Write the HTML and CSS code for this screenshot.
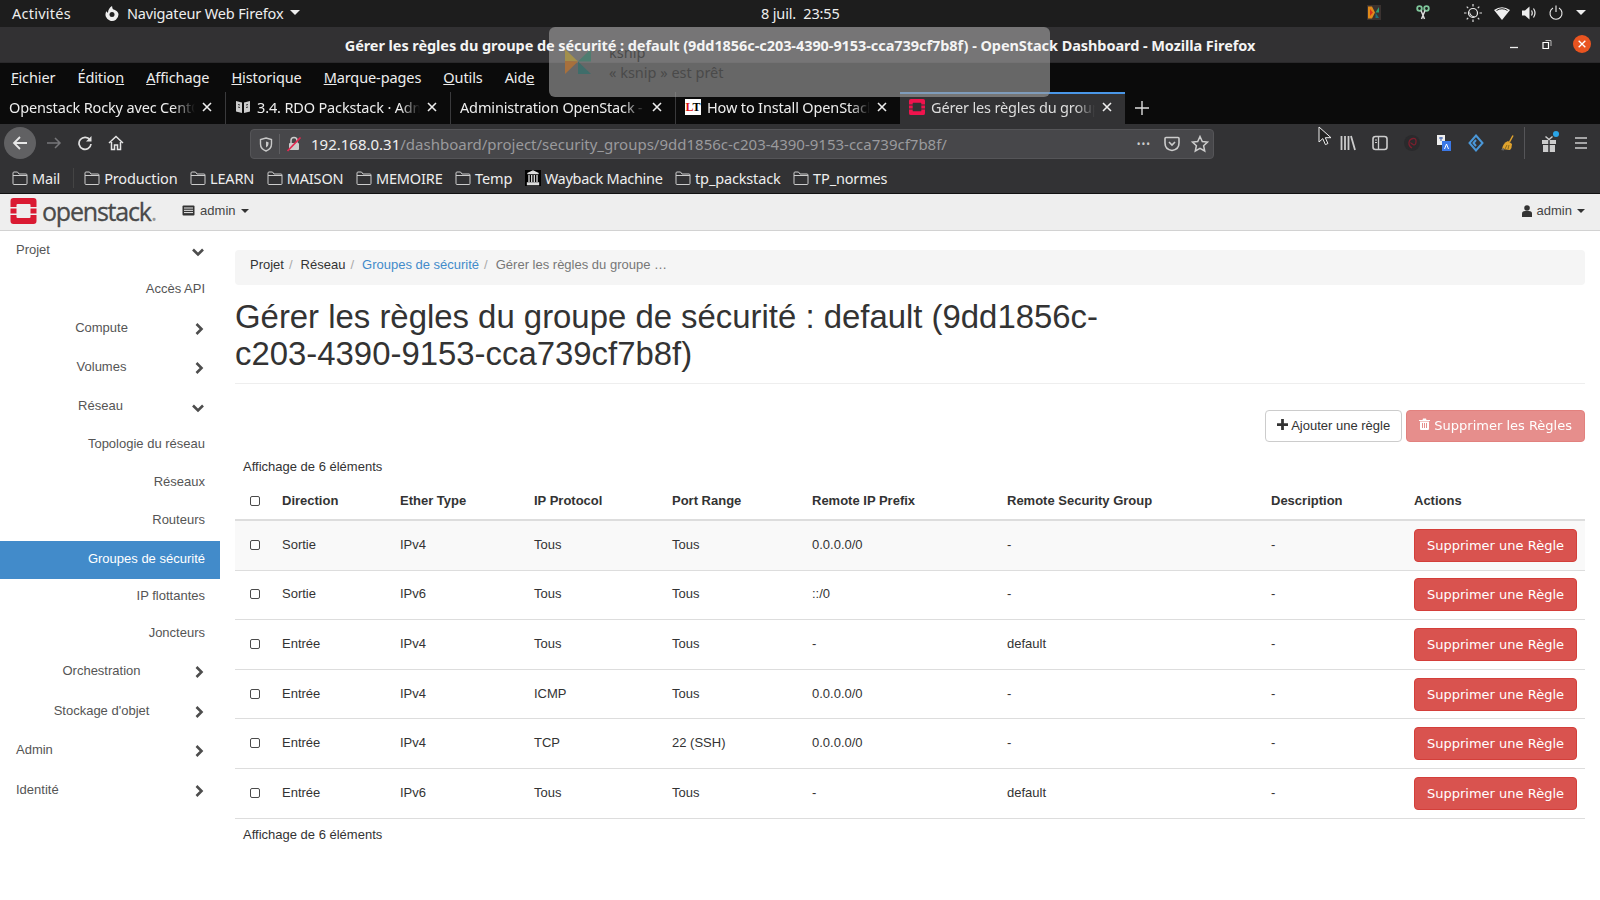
FILE: index.html
```html
<!DOCTYPE html>
<html lang="fr">
<head>
<meta charset="UTF-8">
<title>Gérer les règles du groupe de sécurité - OpenStack Dashboard</title>
<link rel="stylesheet" href="styles.css">
</head>
<body>

<svg class="sprites" width="0" height="0">
    <symbol id="folder" viewBox="0 0 16 16"><path d="M1 13.500V3q0-1 1-1h3.500l1.500 2h7q1 0 1 1v8.500q0 1-1 1H2q-1 0-1-1zM1 5.500h14" fill="none" stroke="currentColor"/></symbol>
    <symbol id="stack" viewBox="0 0 26 26"><path fill="currentColor" d="M3 0h20q3 0 3 3v6h-6V7q0-1-1-1H7q-1 0-1 1v2H0V3q0-3 3-3zM0 17h6v2q0 1 1 1h12q1 0 1-1v-2h6v6q0 3-3 3H3q-3 0-3-3zM0 10.500h6v5H0zM20 10.500h6v5h-6z"/></symbol>
    <symbol id="close" viewBox="0 0 12 12"><path d="M2 2l8 8M10 2l-8 8" stroke="currentColor" stroke-width="1.600" fill="none"/></symbol>
    <symbol id="chev-right" viewBox="0 0 12 14"><path d="M3.500 2l5 5-5 5" stroke="currentColor" stroke-width="2.600" fill="none"/></symbol>
    <symbol id="chev-down" viewBox="0 0 14 12"><path d="M2 3.500l5 5 5-5" stroke="currentColor" stroke-width="2.600" fill="none"/></symbol>
</svg>

<!-- barre du bureau -->
<div class="desktop-bar">
    <div class="desktop-left">
        <span class="activities">Activités</span>
        <span class="app-menu">
            <svg width="16" height="16" viewBox="0 0 16 16"><path fill="#eee" d="M8 1c.5 1.500 0 2.500 1.500 3.500C12 5 14.500 7 14.500 9.500A6.500 6.500 0 1 1 2.500 6c.3 1 .8 1.500 1.500 1.800C4 5 5.500 2.500 8 1z"/><circle cx="8" cy="9.500" r="2.500" fill="#222"/></svg>
            Navigateur Web Firefox <i class="caret-light"></i>
        </span>
    </div>
    <div class="desktop-clock">8 juil.&nbsp; 23:55</div>
    <div class="tray">
        <svg width="14" height="15" viewBox="0 0 14 15"><rect width="14" height="15" fill="#3a3230"/><path d="M1 1.500h4l3 6-3 6H1z" fill="#e08a1a"/><path d="M3 4l3 3.500-3 3.500z" fill="#d8321c"/><path d="M12 2L8.500 7.500H12z" fill="#2e9e78"/><path d="M8.500 7.500L12 13H8.500z" fill="#1c6f7a"/></svg>
        <svg class="tray-scissors" width="14" height="16" viewBox="0 0 14 16"><circle cx="3.500" cy="3.500" r="2.300" fill="none" stroke="#7fc79b" stroke-width="1.800"/><circle cx="10.500" cy="3.500" r="2.300" fill="none" stroke="#7fc79b" stroke-width="1.800"/><path d="M5 5.500L8.500 14M9 5.500L5.500 14" stroke="#ddd" stroke-width="1.500"/></svg>
        <svg class="tray-sun" width="18" height="18" viewBox="0 0 18 18"><circle cx="9" cy="9" r="4.500" fill="#222" stroke="#eee" stroke-width="1.200"/><path d="M6 7a4 4 0 0 0 6 5 4.500 4.500 0 0 1-6-5z" fill="#eee"/><path d="M9 0v2.500M9 15.500V18M0 9h2.500M15.500 9H18M2.700 2.700l1.500 1.500M13.800 13.800l1.500 1.500M15.300 2.700l-1.500 1.500M4.200 13.800l-1.500 1.500" stroke="#ddd" stroke-width="1.200"/></svg>
        <svg width="16" height="14" viewBox="0 0 16 14"><path fill="#eee" d="M0 4Q8-1.500 16 4L8 14z"/><path d="M2.500 4.500Q8 1 13.500 4.500" stroke="#222" fill="none"/></svg>
        <svg width="15" height="14" viewBox="0 0 15 14"><path fill="#eee" d="M0 4.500h3l4.500-4v13L3 9.500H0z"/><path d="M9.500 4.500q1.500 2.500 0 5M11.500 2.500q3 4.500 0 9" stroke="#eee" fill="none" stroke-width="1.200"/></svg>
        <svg width="14" height="15" viewBox="0 0 14 15"><path d="M4 3a6 6 0 1 0 6 0M7 .5v6.500" stroke="#eee" fill="none" stroke-width="1.100"/></svg>
        <i class="caret-light"></i>
    </div>
</div>

<!-- fenetre firefox -->
<div class="title-bar">
    <b class="window-title">Gérer les règles du groupe de sécurité : default (9dd1856c-c203-4390-9153-cca739cf7b8f) - OpenStack Dashboard - Mozilla Firefox</b>
    <div class="window-buttons">
        <svg width="10" height="10" viewBox="0 0 10 10"><path d="M1 8.500h8" stroke="#eee" stroke-width="1.300"/></svg>
        <svg class="window-restore" width="10" height="12" viewBox="0 0 10 12"><path d="M1 4.500h5.500v6H1z" stroke="#fff" fill="none" stroke-width="1.200"/><path d="M3.500 2.500h5.500v5.500" stroke="#bbb" fill="none"/></svg>
        <span class="window-close"><svg width="10" height="10"><use href="#close"/></svg></span>
    </div>
</div>

<div class="menu-bar">
    <span><u>F</u>ichier</span>
    <span>Éditio<u>n</u></span>
    <span><u>A</u>ffichage</span>
    <span><u>H</u>istorique</span>
    <span><u>M</u>arque-pages</span>
    <span><u>O</u>utils</span>
    <span>Aid<u>e</u></span>
</div>

<div class="tab-bar">
    <div class="tab">
        <span class="tab-label">Openstack Rocky avec CentOS 7</span>
        <svg class="tab-close" width="12" height="12"><use href="#close"/></svg>
    </div>
    <div class="tab">
        <svg class="tab-icon" width="16" height="14" viewBox="0 0 16 14"><path fill="#ccc" d="M1 1l6 1.500V13L1 11.500zM15 1L9 2.500V13l6-1.500z"/><path d="M3 4.500l2 .5M3 7l2 .5M11 5l2-.5M11 7.500l2-.5" stroke="#333"/></svg>
        <span class="tab-label">3.4. RDO Packstack · Administration</span>
        <svg class="tab-close" width="12" height="12"><use href="#close"/></svg>
    </div>
    <div class="tab">
        <span class="tab-label">Administration OpenStack - Cloud</span>
        <svg class="tab-close" width="12" height="12"><use href="#close"/></svg>
    </div>
    <div class="tab">
        <span class="tab-icon lt-icon"><em>L</em>T</span>
        <span class="tab-label">How to Install OpenStack on CentOS</span>
        <svg class="tab-close" width="12" height="12"><use href="#close"/></svg>
    </div>
    <div class="tab tab-active">
        <svg class="tab-icon stack-red" width="16" height="16"><use href="#stack"/></svg>
        <span class="tab-label">Gérer les règles du groupe de sécurité</span>
        <svg class="tab-close" width="12" height="12"><use href="#close"/></svg>
    </div>
    <svg class="tab-new" width="16" height="16" viewBox="0 0 16 16"><path d="M8 1v14M1 8h14" stroke="#ddd" stroke-width="1.400"/></svg>
</div>

<div class="nav-bar">
    <span class="nav-back">
        <svg width="18" height="18" viewBox="0 0 18 18"><path d="M16 9H3M9 3L3 9l6 6" stroke="#e8e8e8" stroke-width="1.800" fill="none"/></svg>
    </span>
    <svg class="nav-btn nav-forward" width="18" height="18" viewBox="0 0 18 18"><path d="M2 9h13M10 4l5 5-5 5" stroke="#77777a" stroke-width="1.500" fill="none"/></svg>
    <svg class="nav-btn" width="16" height="16" viewBox="0 0 16 16"><path d="M13 5A6 6 0 1 0 14 9" stroke="#e0e0e0" stroke-width="1.700" fill="none"/><path d="M14.500 1v5.500H9z" fill="#e0e0e0"/></svg>
    <svg class="nav-btn nav-home" width="16" height="16" viewBox="0 0 16 16"><path d="M1 8l7-6.500L15 8M3.500 7v7.500h3V10h3v4.500h3V7" stroke="#e5e5e5" stroke-width="1.500" fill="none"/></svg>
    <div class="url-box">
        <svg width="14" height="15" viewBox="0 0 14 15"><path d="M7 1l5.500 1.500V7q0 5-5.500 7Q1.500 12 1.500 7V2.500z" stroke="#c8c8c8" stroke-width="1.400" fill="none"/><path d="M7 4.500l2.500.7V7q0 2.500-2.500 3.500z" fill="#c8c8c8"/></svg>
        <span class="url-sep"></span>
        <svg width="16" height="16" viewBox="0 0 16 16"><rect x="3" y="7" width="10" height="7" rx="1" fill="#ccc"/><path d="M5 7V4.500a3 3 0 0 1 6 0V7" stroke="#ccc" stroke-width="1.500" fill="none"/><path d="M1.500 15L14.500 1.500" stroke="#e22850" stroke-width="1.800"/></svg>
        <span class="url-text"><span class="url-host">192.168.0.31</span>/dashboard/project/security_groups/9dd1856c-c203-4390-9153-cca739cf7b8f/</span>
        <span class="url-dots">•••</span>
        <svg width="16" height="16" viewBox="0 0 16 16"><path d="M2 1.500h12q1 0 1 1V7q0 6.500-7 7.500Q1 13.500 1 7V2.500q0-1 1-1zM5 6l3 3 3-3" stroke="#ccc" stroke-width="1.600" fill="none"/></svg>
        <svg class="url-star" width="18" height="18" viewBox="0 0 18 18"><path d="M9 1.500l2.300 5 5.200.6-3.900 3.600 1.100 5.300L9 13.300 4.300 16l1.100-5.300L1.500 7.100l5.200-.6z" stroke="#ccc" stroke-width="1.500" fill="none"/></svg>
    </div>
    <div class="nav-tools">
        <svg width="16" height="16" viewBox="0 0 16 16"><path d="M1.500 1v14M5 1v14M8.500 1v14M11 1l4 14" stroke="#ccc" stroke-width="1.800"/></svg>
        <svg width="16" height="16" viewBox="0 0 16 16"><rect x="1" y="1.500" width="14" height="13" rx="2.500" stroke="#ccc" stroke-width="1.600" fill="none"/><path d="M6.500 2v12" stroke="#ccc" stroke-width="1.300"/><path d="M3 5h2M3 7.500h2" stroke="#ccc"/></svg>
        <svg width="16" height="18" viewBox="0 0 16 18"><circle cx="8" cy="9" r="8" fill="#2a2a2c"/><path d="M8 14Q4.500 12 5 8.500T9 4.500 12 8 9 10.500 7 8.500" stroke="#7c1f2e" stroke-width="1.300" fill="none"/></svg>
        <svg width="16" height="18" viewBox="0 0 16 18"><rect x="1" y="1" width="8" height="10" fill="#eee"/><rect x="6" y="7" width="9" height="10" fill="#3b78e7"/><path d="M3 4h4M5 3v4" stroke="#3b5fb0"/><path d="M8.500 15l2-5 2 5" stroke="#fff" fill="none"/></svg>
        <svg width="16" height="18" viewBox="0 0 16 18"><path d="M8 1.500l6.500 7.500L8 16.500 1.500 9zM8 6L5.500 9 8 12" stroke="#4a97d8" stroke-width="2" fill="none"/></svg>
        <svg width="16" height="18" viewBox="0 0 16 18"><path fill="#e0a32e" d="M2 15q1-6 6-8l4 3q0 4-2 6z"/><path d="M9.500 8L13 1.500" stroke="#e0a32e" stroke-width="1.500"/><path d="M1 16q1-2 3-2v2.500z" fill="#666"/><path d="M5 15l2-4M8 15l1-4" stroke="#8a6a1c"/></svg>
        <span class="nav-tools-sep"></span>
        <span class="gift">
            <svg width="16" height="18" viewBox="0 0 16 18"><rect x="1" y="6" width="14" height="4" fill="#ccc"/><rect x="2" y="11" width="12" height="7" fill="#ccc"/><path d="M8 6v12" stroke="#323234" stroke-width="1.500"/><path d="M4.500 2.500L8 5.500l3.500-3" stroke="#ccc" stroke-width="1.500" fill="none"/></svg>
            <i class="gift-dot"></i>
        </span>
        <svg width="16" height="14" viewBox="0 0 16 14"><path d="M2 2h12M2 7h12M2 12h12" stroke="#ccc" stroke-width="1.700"/></svg>
    </div>
    <svg class="mouse-cursor" width="14" height="20" viewBox="0 0 14 20"><path d="M1 1v15l3.800-3.400 2.600 6 2.500-1.100-2.600-5.800H13z" fill="#222" stroke="#eee"/></svg>
</div>

<div class="bookmark-bar">
    <span class="bookmark"><svg width="16" height="16"><use href="#folder"/></svg>Mail</span>
    <span class="bookmark-sep"></span>
    <span class="bookmark"><svg width="16" height="16"><use href="#folder"/></svg>Production</span>
    <span class="bookmark"><svg width="16" height="16"><use href="#folder"/></svg>LEARN</span>
    <span class="bookmark"><svg width="16" height="16"><use href="#folder"/></svg>MAISON</span>
    <span class="bookmark"><svg width="16" height="16"><use href="#folder"/></svg>MEMOIRE</span>
    <span class="bookmark"><svg width="16" height="16"><use href="#folder"/></svg>Temp</span>
    <span class="bookmark bookmark-tight"><svg width="16" height="16" viewBox="0 0 16 16"><rect width="16" height="16" fill="#000"/><path d="M2.500 3.500L8 1l5.500 2.500zM2.500 13h11v1.500h-11zM4 5v7M6.700 5v7M9.300 5v7M12 5v7" stroke="#ddd" stroke-width="1.300" fill="#ddd"/></svg>Wayback Machine</span>
    <span class="bookmark"><svg width="16" height="16"><use href="#folder"/></svg>tp_packstack</span>
    <span class="bookmark"><svg width="16" height="16"><use href="#folder"/></svg>TP_normes</span>
</div>

<!-- notification par dessus la fenetre -->
<div class="notification">
    <svg class="notification-icon" width="28" height="27" viewBox="0 0 28 27"><path d="M1 1l13 12.500L1 13z" fill="#a3904c"/><path d="M1 26l13-12.500L1 13z" fill="#a8703c"/><path d="M27 1L14 13.500h13z" fill="#4e7d70"/><path d="M14 13.500L27 26H14z" fill="#3f6d6a"/></svg>
    <div class="notification-text">
        <div>ksnip</div>
        <div>« ksnip » est prêt</div>
    </div>
</div>

<!-- horizon -->
<div class="os-navbar">
    <div class="os-navbar-left">
        <span class="os-logo">
            <svg width="27" height="26"><use href="#stack"/></svg>
            <span class="os-wordmark">openstack<small>.</small></span>
        </span>
        <span class="os-project">
            <svg width="13" height="11" viewBox="0 0 13 11"><rect x=".5" y=".5" width="12" height="10" rx="1" fill="#333"/><path d="M2 3h9M2 5.300h9M2 7.600h9" stroke="#eee"/></svg>
            admin <i class="caret"></i>
        </span>
    </div>
    <span class="os-user">
        <svg width="10" height="12" viewBox="0 0 10 12"><circle cx="5" cy="3" r="2.800" fill="#333"/><path d="M0 12V8.500Q0 6 3 6h4q3 0 3 2.500V12z" fill="#333"/></svg>
        admin <i class="caret"></i>
    </span>
</div>

<div class="os-layout">
    <nav class="sidebar">
        <div class="side-row side-head"><span>Projet</span><svg class="chev-d" width="14" height="12"><use href="#chev-down"/></svg></div>
        <div class="side-row side-link">Accès API</div>
        <div class="side-row side-group"><span>Compute</span><svg width="12" height="14"><use href="#chev-right"/></svg></div>
        <div class="side-row side-group"><span>Volumes</span><svg width="12" height="14"><use href="#chev-right"/></svg></div>
        <div class="side-row side-group"><span>Réseau</span><svg class="chev-d" width="14" height="12"><use href="#chev-down"/></svg></div>
        <div class="side-row side-link side-sub">Topologie du réseau</div>
        <div class="side-row side-link side-sub">Réseaux</div>
        <div class="side-row side-link side-sub">Routeurs</div>
        <div class="side-row side-link side-sub side-active">Groupes de sécurité</div>
        <div class="side-row side-link side-short">IP flottantes</div>
        <div class="side-row side-link side-short">Joncteurs</div>
        <div class="side-row side-group side-low"><span>Orchestration</span><svg width="12" height="14"><use href="#chev-right"/></svg></div>
        <div class="side-row side-group side-low"><span>Stockage d'objet</span><svg width="12" height="14"><use href="#chev-right"/></svg></div>
        <div class="side-row side-head side-low"><span>Admin</span><svg width="12" height="14"><use href="#chev-right"/></svg></div>
        <div class="side-row side-head side-low"><span>Identité</span><svg width="12" height="14"><use href="#chev-right"/></svg></div>
    </nav>

    <main class="content">
        <div class="breadcrumb">
            <span>Projet</span><i>/</i>
            <span>Réseau</span><i>/</i>
            <a>Groupes de sécurité</a><i>/</i>
            <span class="breadcrumb-current">Gérer les règles du groupe …</span>
        </div>

        <h1>Gérer les règles du groupe de sécurité : default (9dd1856c-c203-4390-9153-cca739cf7b8f)</h1>

        <div class="table-actions">
            <button class="btn btn-default">
                <svg width="11" height="11" viewBox="0 0 12 12"><path d="M6 0v12M0 6h12" stroke="#333" stroke-width="3"/></svg>
                Ajouter une règle
            </button>
            <button class="btn btn-danger btn-disabled">
                <svg width="11" height="12" viewBox="0 0 11 12"><path fill="#fff" fill-rule="evenodd" d="M0 2h3.500l.5-1.500h3L7.500 2H11v1H0zM1 3.500h9V11q0 1-1 1H2q-1 0-1-1zM3 5v5h1V5zM5 5v5h1V5zM7 5v5h1V5z"/></svg>
                Supprimer les Règles
            </button>
        </div>

        <div class="count">Affichage de 6 éléments</div>

        <table class="rules">
            <colgroup>
                <col class="col-check"><col class="col-dir"><col class="col-ether"><col class="col-proto"><col class="col-port"><col class="col-prefix"><col class="col-group"><col class="col-desc"><col class="col-act">
            </colgroup>
            <thead>
                <tr><th><i class="check check-head"></i></th><th>Direction</th><th>Ether Type</th><th>IP Protocol</th><th>Port Range</th><th>Remote IP Prefix</th><th>Remote Security Group</th><th>Description</th><th>Actions</th></tr>
            </thead>
            <tbody>
                <tr class="row-odd"><td><i class="check"></i></td><td>Sortie</td><td>IPv4</td><td>Tous</td><td>Tous</td><td>0.0.0.0/0</td><td>-</td><td>-</td><td><button class="btn btn-danger btn-row">Supprimer une Règle</button></td></tr>
                <tr><td><i class="check"></i></td><td>Sortie</td><td>IPv6</td><td>Tous</td><td>Tous</td><td>::/0</td><td>-</td><td>-</td><td><button class="btn btn-danger btn-row">Supprimer une Règle</button></td></tr>
                <tr><td><i class="check"></i></td><td>Entrée</td><td>IPv4</td><td>Tous</td><td>Tous</td><td>-</td><td>default</td><td>-</td><td><button class="btn btn-danger btn-row">Supprimer une Règle</button></td></tr>
                <tr><td><i class="check"></i></td><td>Entrée</td><td>IPv4</td><td>ICMP</td><td>Tous</td><td>0.0.0.0/0</td><td>-</td><td>-</td><td><button class="btn btn-danger btn-row">Supprimer une Règle</button></td></tr>
                <tr><td><i class="check"></i></td><td>Entrée</td><td>IPv4</td><td>TCP</td><td>22 (SSH)</td><td>0.0.0.0/0</td><td>-</td><td>-</td><td><button class="btn btn-danger btn-row">Supprimer une Règle</button></td></tr>
                <tr><td><i class="check"></i></td><td>Entrée</td><td>IPv6</td><td>Tous</td><td>Tous</td><td>-</td><td>default</td><td>-</td><td><button class="btn btn-danger btn-row">Supprimer une Règle</button></td></tr>
            </tbody>
        </table>

        <div class="count count-bottom">Affichage de 6 éléments</div>
    </main>
</div>

</body>
</html>
```

FILE: styles.css
```css
body {
    margin: 0;
    width: 1600px;
    height: 900px;
    overflow: hidden;
    position: relative;
    background-color: #fff;
    color: #333;
    font-family: "Liberation Sans", Arial, sans-serif;
    font-size: 13px;
}

.sprites {
    position: absolute;
}

/* barres de firefox */
.desktop-bar, .title-bar, .menu-bar, .tab-bar, .nav-bar, .bookmark-bar {
    font-family: "Noto Sans", sans-serif;
    font-size: 14.5px;
    letter-spacing: -0.15px;
    color: #eee;
    display: flex;
    align-items: center;
}

.desktop-bar {
    height: 27px;
    background-color: #1d1d1d;
    justify-content: space-between;
    padding: 0 12px 2px;
    position: relative;
    box-sizing: border-box;
}

.desktop-left {
    display: flex;
    align-items: center;
    gap: 33px;
}

.activities {
    letter-spacing: 0.25px;
}

.app-menu {
    display: flex;
    align-items: center;
    gap: 7px;
}

.desktop-clock {
    position: absolute;
    left: 761px;
}

.tray {
    display: flex;
    align-items: center;
    padding-right: 2px;
}

.tray svg {
    margin-right: 12px;
}

.tray .caret-light {
    margin-left: 1px;
}

.tray-scissors {
    margin-left: 23px;
    margin-right: 34px !important;
}

.caret-light {
    display: inline-block;
    border-top: 5px solid #eee;
    border-left: 5px solid transparent;
    border-right: 5px solid transparent;
}

.title-bar {
    height: 36px;
    background-color: #323133;
    justify-content: center;
    position: relative;
    box-sizing: border-box;
    border-bottom: 1px solid #2a292b;
}

.window-title {
    font-weight: 700;
    letter-spacing: -0.07px;
    color: #f4f4f4;
    position: relative;
    z-index: 2;
}

.window-buttons {
    position: absolute;
    right: 9px;
    top: 8px;
    display: flex;
    align-items: center;
    gap: 23px;
}

.window-restore {
    margin-right: -2px;
}

.window-close {
    width: 18px;
    height: 18px;
    border-radius: 50%;
    background-color: #e95420;
    color: #fff;
    display: flex;
    align-items: center;
    justify-content: center;
}

.menu-bar {
    height: 29px;
    background-color: #0b0b0b;
    padding: 0 0 2px 11px;
    box-sizing: border-box;
    letter-spacing: -0.1px;
    gap: 22px;
}

.tab-bar {
    height: 32px;
    background-color: #0b0b0b;
}

.tab {
    width: 225px;
    height: 32px;
    box-sizing: border-box;
    padding: 0 12px 3px 9px;
    display: flex;
    align-items: center;
    gap: 6px;
}

.tab + .tab {
    border-left: 1px solid #3a3a3c;
}

.tab-active {
    background-color: #323234;
    border-top: 2px solid #4a97e8;
    padding-bottom: 5px;
    color: #ddd;
}

.tab + .tab-active {
    border-left: 0;
}

.tab-label {
    flex: 1;
    white-space: nowrap;
    overflow: hidden;
    min-width: 0;
    -webkit-mask-image: linear-gradient(to right, #000 88%, transparent);
    mask-image: linear-gradient(to right, #000 88%, transparent);
}

.tab-close {
    color: #eee;
    flex: none;
}

.tab-icon {
    flex: none;
}

.lt-icon {
    width: 16px;
    height: 16px;
    background-color: #fff;
    color: #000;
    font-family: "Liberation Serif", serif;
    font-weight: 700;
    font-size: 12px;
    line-height: 16px;
    text-align: center;
    letter-spacing: 0;
}

.lt-icon em {
    color: #d11;
    font-style: normal;
}

.stack-red {
    color: #f0134d;
}

.tab-new {
    margin-left: 9px;
}

.nav-bar {
    height: 37px;
    background-color: #323234;
    padding-left: 4px;
    position: relative;
}

.nav-back {
    width: 32px;
    height: 32px;
    border-radius: 50%;
    background-color: #616163;
    display: flex;
    align-items: center;
    justify-content: center;
}

.nav-btn {
    margin-left: 14px;
}

.nav-btn.nav-forward {
    margin-left: 9px;
}

.nav-btn.nav-home {
    margin-left: 15px;
}

.url-box {
    position: absolute;
    left: 250px;
    top: 5px;
    width: 964px;
    height: 30px;
    box-sizing: border-box;
    background-color: #47474a;
    border: 1px solid #555558;
    border-radius: 4px;
    display: flex;
    align-items: center;
    padding: 0 4px 0 8px;
    gap: 6px;
    font-size: 15px;
    letter-spacing: 0;
}

.url-sep {
    width: 1px;
    height: 20px;
    background-color: #5f5f62;
}

.url-text {
    flex: 1;
    margin-left: 3px;
    color: #9a9a9d;
}

.url-host {
    color: #eee;
}

.url-dots {
    font-size: 10px;
    letter-spacing: 1px;
    color: #ccc;
    margin-right: 7px;
}

.url-star {
    margin-left: 5px;
}

.nav-tools {
    position: absolute;
    right: 11px;
    top: 0;
    height: 37px;
    display: flex;
    align-items: center;
    gap: 16px;
}

.nav-tools-sep {
    width: 1px;
    height: 32px;
    margin-left: -8px;
    background-color: #555558;
}

.gift {
    position: relative;
    display: flex;
}

.gift-dot {
    position: absolute;
    right: -2px;
    top: -3px;
    width: 6px;
    height: 6px;
    border-radius: 50%;
    background-color: #2aa5e8;
}

.mouse-cursor {
    position: absolute;
    left: 1318px;
    top: 2px;
}

.bookmark-bar {
    height: 33px;
    background-color: #323234;
    padding: 1px 0 0 12px;
    gap: 12.5px;
    box-sizing: border-box;
    border-bottom: 1px solid #111;
}

.bookmark {
    display: flex;
    align-items: center;
    gap: 4px;
    white-space: nowrap;
}

.bookmark svg {
    color: #ccc;
}

.bookmark-tight {
    letter-spacing: -0.3px;
}

.bookmark-sep {
    width: 1px;
    height: 20px;
    margin-right: -2px;
    background-color: #444;
}

/* notification gnome */
.notification {
    position: absolute;
    left: 549px;
    top: 27px;
    width: 501px;
    height: 70px;
    box-sizing: border-box;
    background-color: rgba(160, 160, 160, 0.62);
    border-radius: 6px;
    display: flex;
    gap: 17px;
    padding: 15px 15px 0;
    font-family: "Noto Sans", sans-serif;
    font-size: 14.5px;
    color: #4a4a4a;
}

.notification-icon {
    margin-top: 6px;
    flex: none;
}

.notification-text div {
    line-height: 20px;
}

/* openstack */
.os-navbar {
    height: 37px;
    box-sizing: border-box;
    background-color: #eee;
    border-bottom: 1px solid #d2d2d2;
    display: flex;
    align-items: center;
    justify-content: space-between;
    padding: 0 15px 3px 10px;
}

.os-navbar-left {
    display: flex;
    align-items: center;
    gap: 26px;
}

.os-logo {
    display: flex;
    align-items: center;
    gap: 5px;
    color: #da1a32;
}

.os-wordmark {
    font-family: "Open Sans", sans-serif;
    font-size: 25px;
    letter-spacing: -1.2px;
    color: #4a4a4a;
    -webkit-text-stroke: 0.3px #4a4a4a;
}

.os-wordmark small {
    font-size: 25px;
    color: #999;
    -webkit-text-stroke: 0;
}

.os-project, .os-user {
    display: flex;
    align-items: center;
    gap: 5px;
    color: #444;
}

.caret {
    display: inline-block;
    border-top: 4px solid #333;
    border-left: 4px solid transparent;
    border-right: 4px solid transparent;
}

.os-layout {
    display: flex;
}

.sidebar {
    width: 220px;
    flex: none;
    color: #555;
}

.side-row {
    height: 39px;
    display: flex;
    align-items: center;
    box-sizing: border-box;
    padding: 0 15px 3px 0;
    white-space: nowrap;
}

.side-row svg {
    flex: none;
    color: #4d4d4d;
    margin: 3px 0 0 -13px;
}

.side-row .chev-d {
    margin-top: 5px;
}

.side-row span {
    flex: 1;
}

.side-head {
    padding-left: 16px;
}

.side-group span {
    text-align: center;
    margin-right: 3px;
}

.side-link {
    justify-content: flex-end;
}

.side-sub {
    height: 38.200px;
}

.side-short {
    height: 36.800px;
}

.side-low {
    height: 39.600px;
}

.side-active {
    background-color: #428bca;
    color: #fff;
}

.content {
    flex: 1;
    min-width: 0;
    padding: 19px 15px 0;
}

.breadcrumb {
    height: 35px;
    box-sizing: border-box;
    background-color: #f5f5f5;
    border-radius: 4px;
    padding: 0 15px 7px;
    display: flex;
    align-items: center;
    white-space: nowrap;
}

.breadcrumb i {
    font-style: normal;
    color: #aaa;
    padding: 0 8px 0 5px;
}

.breadcrumb a {
    color: #428bca;
}

.breadcrumb-current {
    color: #777;
}

h1 {
    font-size: 32.900px;
    font-weight: 400;
    line-height: 36.500px;
    margin: 14px 0 0;
    padding: 0 470px 11px 0;
    border-bottom: 1px solid #eee;
}

.table-actions {
    display: flex;
    justify-content: flex-end;
    gap: 4px;
    margin-top: 26px;
}

.btn {
    height: 32px;
    box-sizing: border-box;
    border-radius: 4px;
    border: 1px solid #ccc;
    padding: 0 12px 2px;
    font-size: 13px;
    font-family: "Liberation Sans", Arial, sans-serif;
    cursor: pointer;
}

.btn-default {
    background-color: #fff;
    color: #333;
    padding: 0 11px 2px;
}

.btn-danger {
    background-color: #d9534f;
    border-color: #d43f3a;
    color: #fff;
    font-family: "DejaVu Sans", sans-serif;
}

.btn-disabled {
    opacity: 0.65;
}

.btn-row {
    width: 163px;
    height: 33px;
    padding: 0;
    display: block;
}

.count {
    margin: 15px 0 0 8px;
    line-height: 20px;
}

.count-bottom {
    margin-top: 6px;
}

.rules {
    width: 100%;
    table-layout: fixed;
    border-collapse: collapse;
    margin-top: 4px;
}

.col-check { width: 47px; }
.col-dir { width: 118px; }
.col-ether { width: 134px; }
.col-proto { width: 138px; }
.col-port { width: 140px; }
.col-prefix { width: 195px; }
.col-group { width: 264px; }
.col-desc { width: 143px; }

.rules th {
    text-align: left;
    height: 38px;
    padding: 0;
    border-bottom: 2px solid #ddd;
}

.rules td {
    padding: 0 0 2px;
    height: 46.600px;
    border-bottom: 1px solid #ddd;
}

.rules td:last-child {
    padding-bottom: 0;
    height: 48.600px;
}

.row-odd td {
    background-color: #f9f9f9;
}

.check {
    display: block;
    width: 8px;
    height: 8px;
    margin: 1px 0 0 15px;
    border: 1px solid #4a4a4a;
    border-radius: 2px;
    background-color: #fff;
}

.check-head {
    margin-top: 2px;
}
```
